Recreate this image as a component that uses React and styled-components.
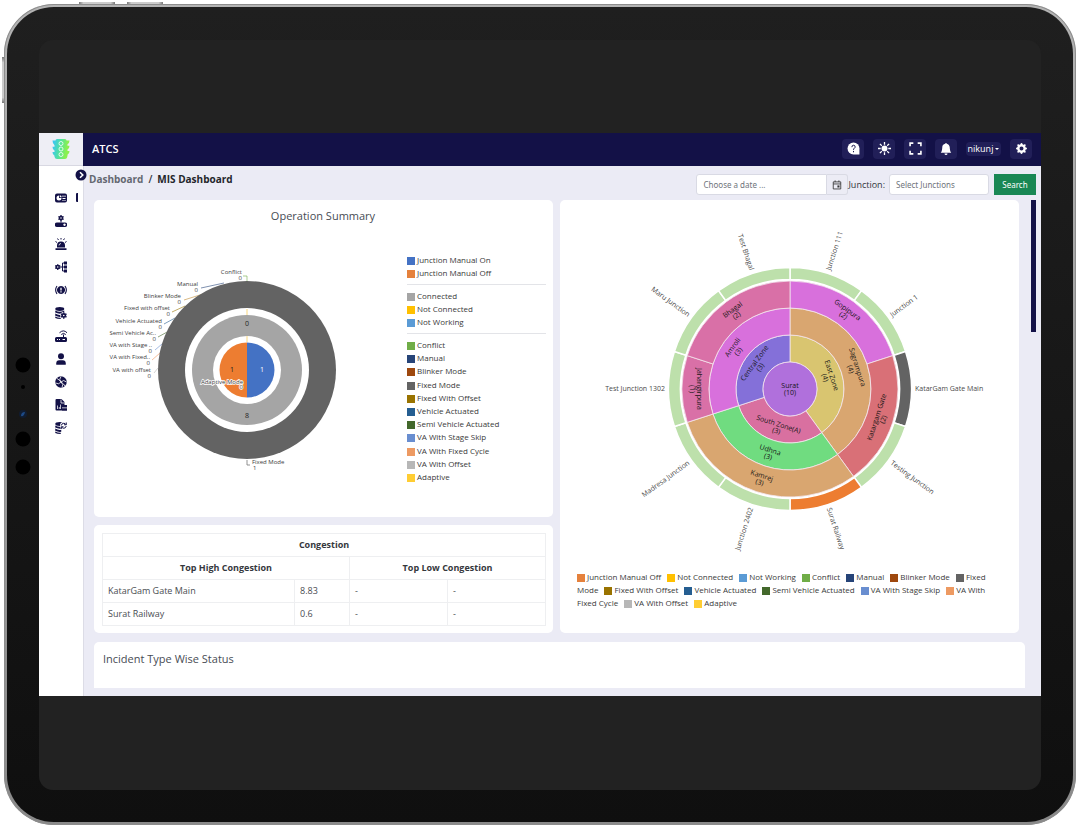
import React from "react";
import styled, { createGlobalStyle } from "styled-components";
import { BsGearFill, BsBellFill } from "react-icons/bs";

const NAVY = "#131147";
const MIST = "#ebebf5";

const GlobalStyle = createGlobalStyle`
  * { box-sizing: border-box; }
  body {
    margin: 0;
    background: #fff;
    color: #33363b;
    font-family: "Open Sans", "Noto Sans", sans-serif;
    font-size: 9px;
  }
  button, input { font-family: inherit; }
  ul { list-style: none; margin: 0; padding: 0; }
  h1, h2 { margin: 0; font-weight: 400; }
`;

/* ---------- tablet frame ---------- */

const Page = styled.div`
  padding: 4px 4px 5px;
`;

const Frame = styled.div`
  position: relative;
  padding: 3px;
  border-radius: 50px;
  background: linear-gradient(#b4b4b4, #8a8a8a);
  box-shadow: inset 0 0 0 1px #8d8d8d;
`;

const Bezel = styled.div`
  position: relative;
  padding: 33px 32px 32px;
  border-radius: 47px;
  background: linear-gradient(#1f1f1f, #0f0f0f);
`;

const Screen = styled.div`
  padding: 93px 0 94px;
  border-radius: 14px;
  background: #222;
`;

const SideKey = styled.span`
  position: absolute;
  background: linear-gradient(to ${(p) => (p.$left ? "bottom" : "right")}, #777, #ccc 12%, #ccc 88%, #777);
  ${(p) =>
    p.$left
      ? "left: -2px; top: 53px; width: 2px; height: 46px;"
      : `top: -2px; left: ${p.$x}px; width: 36px; height: 2px;`}
`;

const Cameras = styled.svg`
  position: absolute;
  left: 8px;
  top: 50%;
  transform: translateY(-50%);
`;

/* ---------- application shell ---------- */

const Shell = styled.div`
  display: grid;
  grid-template-columns: 44px 1fr;
  background: ${MIST};
`;

const Side = styled.nav`
  background: #fff;
  box-shadow: 1px 0 #dcdce6;
`;

const Brand = styled.a`
  display: flex;
  align-items: center;
  justify-content: center;
  height: 33px;
  background: #eeeef5;
  border-bottom: 1px solid #d8d8e2;
`;

const NavList = styled.ul`
  padding-top: 20px;
`;

const NavLink = styled.a`
  position: relative;
  display: flex;
  align-items: center;
  justify-content: center;
  height: 23px;
  color: ${NAVY};
  &::after {
    content: "";
    display: ${(p) => (p.$active ? "block" : "none")};
    position: absolute;
    right: 5px;
    width: 2px;
    height: 9px;
    border-radius: 1px 0 0 1px;
    background: ${NAVY};
  }
`;

const Main = styled.div`
  position: relative;
  min-width: 0;
`;

const TopBar = styled.header`
  display: flex;
  align-items: center;
  gap: 9px;
  height: 33px;
  padding: 0 9px 2px;
  background: ${NAVY};
  color: #fff;
`;

const AppName = styled.h1`
  flex: 1;
  font-size: 11px;
  line-height: 16px;
  font-weight: 600;
`;

const BarButton = styled.button`
  display: flex;
  align-items: center;
  justify-content: center;
  width: 22px;
  height: 20px;
  padding: 0;
  border: 0;
  border-radius: 4px;
  background: #211f58;
  color: #fff;
`;

const UserButton = styled(BarButton)`
  width: 35px;
  height: 14px;
  gap: 2px;
  font-size: 9px;
`;

const Caret = styled.i`
  border: 2px solid transparent;
  border-top-color: #fff;
  border-bottom: 0;
`;

const Expander = styled.button`
  position: absolute;
  left: -8px;
  top: 36px;
  width: 12px;
  height: 12px;
  padding: 0;
  border: 0;
  background: none;
  line-height: 0;
`;

const ToolRow = styled.div`
  display: flex;
  align-items: flex-start;
  justify-content: space-between;
  padding: 8px 5px 5px 6px;
`;

const Crumbs = styled.div`
  display: flex;
  gap: 5px;
  font-size: 10px;
  line-height: 11px;
  font-weight: 600;
`;

const Crumb = styled.a`
  color: ${(p) => (p.$current ? "#24262b" : "#646871")};
  font-weight: 700;
  text-decoration: none;
`;

const Filters = styled.form`
  display: flex;
  align-items: center;
  height: 21px;
`;

const Field = styled.input`
  width: ${(p) => p.$w}px;
  height: 21px;
  padding: 0 6px;
  border: 1px solid #d9dae4;
  border-radius: ${(p) => (p.$joined ? "3px 0 0 3px" : "3px")};
  background: #fff;
  font-size: 8px;
  font-family: "Noto Sans", "Open Sans", sans-serif;
  &::placeholder { color: #6f747b; }
`;

const DateButton = styled.button`
  display: flex;
  align-items: center;
  justify-content: center;
  width: 21px;
  height: 21px;
  padding: 0;
  border: 1px solid #d9dae4;
  border-left: 0;
  border-radius: 0 3px 3px 0;
  background: #ececf5;
  color: #333;
`;

const FieldLabel = styled.label`
  margin-right: 4px;
  font-size: 9px;
  color: #33363b;
`;

const SearchButton = styled.button`
  width: 42px;
  height: 21px;
  margin-left: 5px;
  padding: 0;
  border: 0;
  background: #198754;
  color: #fff;
  font-size: 8px;
  font-family: "Noto Sans", "Open Sans", sans-serif;
`;

/* ---------- dashboard content ---------- */

const Body = styled.div`
  display: flex;
  justify-content: space-between;
  padding: 0 5px 8px 11px;
`;

const Content = styled.main`
  flex: 1;
  min-width: 0;
`;

const ScrollThumb = styled.div`
  width: 5px;
  height: 132px;
  margin-left: 6px;
  background: ${NAVY};
`;

const Columns = styled.div`
  display: grid;
  grid-template-columns: 1fr 1fr;
  gap: 7px;
  margin-right: 6px;
`;

const Stack = styled.div`
  display: flex;
  flex-direction: column;
  gap: 8px;
  min-width: 0;
`;

const Card = styled.section`
  border-radius: 5px;
  background: #fff;
  padding: ${(p) => p.$pad};
`;

const CardTitle = styled.h2`
  font-size: 11px;
  line-height: 14px;
  text-align: ${(p) => p.$align || "left"};
  color: #474c54;
`;

const ChartRow = styled.div`
  display: flex;
  justify-content: space-between;
  gap: 7px;
  margin-top: 30px;
`;

const LegendColumn = styled.div`
  flex: 1;
`;

const LegendGroup = styled.ul`
  display: grid;
  align-content: space-between;
  height: ${(p) => p.$h}px;
  & + & {
    margin-top: 5px;
    padding-top: 4px;
    border-top: 1px solid #e3e4e8;
  }
`;

const LegendItem = styled.li`
  display: ${(p) => (p.$inline ? "inline" : "block")};
  margin-right: ${(p) => (p.$inline ? 4 : 0)}px;
  font-size: 8px;
  line-height: 13px;
  color: #3a3a3a;
`;

const Swatch = styled.i`
  display: inline-block;
  width: 8px;
  height: 8px;
  margin-right: 2px;
  vertical-align: -2px;
  background: ${(p) => p.$c};
`;

const InlineLegend = styled.ul`
  margin-top: 6px;
  line-height: 13px;
  font-size: 8px;
`;

const SunburstChart = styled.svg`
  display: block;
  margin: 0 auto;
`;

const Table = styled.table`
  width: 100%;
  table-layout: fixed;
  border-collapse: collapse;
  font-size: 9px;
  line-height: 12px;
  td, th {
    height: 23px;
    padding: 0 5px;
    border: 1px solid #eeeff1;
    text-align: left;
    color: #4a4d52;
  }
  th { text-align: center; font-weight: 700; color: #35383d; }
`;

const ClippedCard = styled(Card)`
  height: 46px;
  margin-top: 9px;
  border-radius: 5px 5px 0 0;
`;

/* ---------- drawings ---------- */

const polar = (r, deg) => {
  const a = ((deg - 90) * Math.PI) / 180;
  return [r * Math.cos(a), r * Math.sin(a)];
};

const sector = (r0, r1, a0, a1) => {
  const [x0, y0] = polar(r1, a0);
  const [x1, y1] = polar(r1, a1);
  const [x2, y2] = polar(r0, a1);
  const [x3, y3] = polar(r0, a0);
  const big = a1 - a0 > 180 ? 1 : 0;
  return `M${x0} ${y0}A${r1} ${r1} 0 ${big} 1 ${x1} ${y1}L${x2} ${y2}A${r0} ${r0} 0 ${big} 0 ${x3} ${y3}Z`;
};

const donutLabels = [
  ["Conflict", -5, -98, "#70ad47", "M-4 -94H0V-89"],
  ["Manual", -49, -86, "#264478", "M-46 -82L-23 -87"],
  ["Blinker Mode", -66, -74, "#c08a30", "M-63 -70L-44 -76"],
  ["Fixed with offset", -77, -62, "#997300", "M-75 -58L-62 -64"],
  ["Vehicle Actuated", -85, -49, "#255e91", "M-83 -46L-72 -52"],
  ["Semi Vehicle Ac..", -91, -37, "#43682b", "M-89 -33L-78 -39"],
  ["VA with Stage ..", -95, -25, "#698ed0", "M-92 -20L-85 -26"],
  ["VA with Fixed..", -97, -13, "#f1975a", "M-95 -10L-87 -17"],
  ["VA with offset", -96, 0, "#b7b7b7", "M-93 3L-89 -2"],
];

const Donut = () => (
  <svg width="300" height="240" viewBox="-147 -117 300 240" fontSize="6" fill="#3c3c3c" role="img" aria-label="Operation Summary">
    {donutLabels.map(([name, x, y, color, line]) => (
      <g key={name} textAnchor="end">
        <path d={line} fill="none" stroke={color} strokeWidth=".6" />
        <text x={x} y={y + 2}>{name}</text>
        <text x={x} y={y + 8}>0</text>
      </g>
    ))}
    <circle r="89" fill="#636363" />
    <circle r="62" fill="#fff" />
    <circle r="55" fill="#a5a5a5" />
    <circle r="34" fill="#fff" />
    <path d="M0 -27.500A27.500 27.500 0 0 1 0 27.500Z" fill="#4472c4" />
    <path d="M0 -27.500A27.500 27.500 0 0 0 0 27.500Z" fill="#ed7d31" />
    <path d="M0 -61V-55M0 -34V-28" stroke="#fbd87f" />
    <path d="M0 90V95H3" fill="none" stroke="#777" strokeWidth=".8" />
    <text x="5" y="94">Fixed Mode</text>
    <text x="6" y="100">1</text>
    <g textAnchor="end" stroke="#fff" strokeWidth="1.500" paintOrder="stroke">
      <text x="-4" y="14">Adaptive Mode</text>
      <text x="-4" y="19">0</text>
    </g>
    <g textAnchor="middle" fontSize="7" fill="#222">
      <text y="-44">0</text>
      <text y="48">8</text>
      <text x="-15" y="2">1</text>
      <text x="15" y="2" fill="#fff">1</text>
    </g>
  </svg>
);

const zones = [
  [27, 54, 0, 144, "#d9c570", "East Zone", 4],
  [27, 54, 144, 252, "#d970a0", "South Zone(A)", 3],
  [27, 54, 252, 360, "#8470d9", "Central Zone", 3],
  [54, 81, 0, 144, "#d9a670", "Sagrampura", 4],
  [54, 81, 144, 252, "#70dc80", "Udhna", 3],
  [54, 81, 252, 360, "#d870dc", "Amroli", 3],
  [81, 108, 0, 72, "#d870dc", "Gopipura", 2],
  [81, 108, 72, 144, "#d97077", "Katargam Gate", 2],
  [81, 108, 144, 252, "#d9a670", "Kamrej", 3],
  [81, 108, 252, 288, "#d970a7", "Jahangirpura", 1],
  [81, 108, 288, 360, "#d970a7", "Bhagal", 2],
];

const GREEN = "#bde0ab";
const junctions = [
  ["Junction 111", GREEN],
  ["Junction 1", GREEN],
  ["KatarGam Gate Main", "#636363"],
  ["Testing Junction", GREEN],
  ["Surat Railway", "#ed7d31"],
  ["Junction 2402", GREEN],
  ["Madresa Junction", GREEN],
  ["Test Junction 1302", GREEN],
  ["Maru Junction", GREEN],
  ["Test Bhagal", GREEN],
];

const Sunburst = () => (
  <SunburstChart width="390" height="350" viewBox="-195 -175 390 350" fontSize="7" role="img" aria-label="Junction status by zone">
    {zones.map(([r0, r1, a0, a1, color, name]) => (
      <path key={name} d={sector(r0, r1, a0, a1)} fill={color} stroke="#f4e6ee" strokeWidth=".8" />
    ))}
    <circle r="27" fill="#b070dc" stroke="#f4e6ee" strokeWidth=".8" />
    {junctions.map(([name, color], i) => (
      <path key={name} d={sector(109.5, 121.5, i * 36, i * 36 + 36)} fill={color} stroke="#fff" strokeWidth="1.500" />
    ))}
    <g textAnchor="middle" fill="#151515">
      <text y="-1">Surat</text>
      <text y="6">(10)</text>
      {zones.map(([r0, r1, a0, a1, , name, count]) => {
        const mid = (a0 + a1) / 2;
        const lower = mid > 90 && mid < 270;
        const [x, y] = polar((r0 + r1) / 2, mid);
        return (
          <g key={name} transform={`translate(${x} ${y}) rotate(${lower ? mid - 180 : mid === 270 ? 90 : mid})`}>
            <text y="-1">{name}</text>
            <text y="6">({count})</text>
          </g>
        );
      })}
    </g>
    <g fill="#4a4a4a">
      {junctions.map(([name], i) => {
        const mid = i * 36 + 18;
        const left = mid > 180;
        const [x, y] = polar(125, mid);
        return (
          <text
            key={name}
            y="2"
            textAnchor={left ? "end" : "start"}
            transform={`translate(${x} ${y}) rotate(${left ? mid + 90 : mid - 90})`}
          >
            {name}
          </text>
        );
      })}
    </g>
  </SunburstChart>
);

const Logo = () => (
  <svg width="18" height="20" viewBox="0 0 18 20" aria-hidden="true">
    <defs>
      <linearGradient id="lamp" x1="0" y1="0" x2="1" y2=".2">
        <stop offset=".1" stopColor="#3cc8ee" />
        <stop offset=".5" stopColor="#52e39c" />
        <stop offset=".9" stopColor="#8bf04f" />
      </linearGradient>
    </defs>
    <path
      fill="url(#lamp)"
      d="M5 0h8q1.500 0 1.500 1.500H17.500q0 3-2 3.800v1.400h2q0 3-2 3.800v1.400h2q0 3-2 3.800v1Q15 20 13 20H5q-2 0-2.500-2.300v-1q-2-.8-2-3.800h2v-1.400Q.5 10.700 .5 7.700h2V6.300Q.5 4.500 .5 1.500h3Q3.500 0 5 0Z"
    />
    <g fill="none" stroke="#fff" strokeOpacity=".8">
      <circle cx="9" cy="4.500" r="2" />
      <circle cx="9" cy="10" r="2" />
      <circle cx="9" cy="15.500" r="2" />
    </g>
  </svg>
);

const Icon = ({ children, size = 12 }) => (
  <svg width={size} height={size} viewBox="0 0 24 24" fill="currentColor" stroke="none" aria-hidden="true">
    {children}
  </svg>
);

const Cog = ({ x, y, r }) => (
  <g transform={`translate(${x} ${y})`} fill="none" stroke="currentColor">
    <circle r={r * 0.6} strokeWidth={r * 0.6} />
    {[0, 60, 120].map((deg) => (
      <path
        key={deg}
        transform={`rotate(${deg})`}
        d={`M0 ${-r * 1.15}V${-r * 0.7}M0 ${r * 0.7}V${r * 1.15}`}
        strokeWidth={r * 0.5}
      />
    ))}
  </g>
);

const Disks = () => (
  <>
    <ellipse cx="9.500" cy="4" rx="9" ry="3.800" />
    <path d="M.5 7q9 5 18 0v4q-9 4.500-18 0ZM.5 13q6 4 12 2.500v4q-6 1-12-2ZM.5 19q6 3 11 2.500V24Q4 24 .5 22Z" />
  </>
);

const navIcons = {
  Dashboard: (
    <>
      <path fillRule="evenodd" d="M4 3h16q4 0 4 4v10q0 4-4 4H4q-4 0-4-4V7q0-4 4-4ZM8 7a5 5 0 1 0 5 5H8ZM15 7v3h2V7ZM19 7v3h2V7ZM15 12v2h6v-2ZM15 16v2h2v-2ZM19 16v2h2v-2Z" />
      <path d="M9.500 6.500a4.500 4.500 0 0 1 4 4h-4Z" fill="#fff" />
    </>
  ),
  Control: (
    <>
      <Cog x="12" y="6" r="5.200" />
      <path d="M11 11h2v4h-2Z" />
      <path fillRule="evenodd" d="M4 15h16a4.500 4.500 0 0 1 0 9H4a4.500 4.500 0 0 1 0-9Zm15 2a2.400 2.400 0 1 0 .1 0Z" />
    </>
  ),
  Alarms: (
    <>
      <path d="M4 19v-4q0-8 8-8t8 8v4ZM1 20.500h22V24H1Z" />
      <path d="M8 15q0-4 4-4" stroke="#fff" strokeWidth="1.500" fill="none" />
      <path d="M1 7l3 2M23 7l-3 2M5 1l2 3M19 1l-2 3M12 0v3" stroke="currentColor" strokeWidth="2" />
    </>
  ),
  Network: (
    <>
      <Cog x="5.500" y="12" r="5" />
      <path d="M10 12h10M15 4v16M15 4h5M15 20h5" stroke="currentColor" strokeWidth="2" fill="none" />
      <path d="M18 1h6v6h-6ZM18 9h6v6h-6ZM18 17h6v6h-6Z" />
    </>
  ),
  Alerts: (
    <>
      <path fillRule="evenodd" d="M12 4a8 8 0 1 0 .1 0ZM10.700 7.500h2.600v5.500h-2.600ZM10.700 14.500h2.600v2.500h-2.600Z" />
      <path d="M4 4q-5.500 8 0 16M20 4q5.500 8 0 16" stroke="currentColor" strokeWidth="2.200" fill="none" />
    </>
  ),
  Data: (
    <>
      <Disks />
      <circle cx="17.500" cy="17" r="7" fill="#fff" />
      <Cog x="17.500" y="17" r="5.500" />
    </>
  ),
  Devices: (
    <>
      <path fillRule="evenodd" d="M3 14h18q3 0 3 3v4q0 3-3 3H3q-3 0-3-3v-4q0-3 3-3ZM4 18v2h2v-2ZM8 18v2h2v-2ZM15 18v2h5v-2Z" />
      <path d="M17 9v6M12.500 9q4.500-4.500 9 0M9 5.500q8-7.500 15 0" stroke="currentColor" strokeWidth="2" fill="none" />
    </>
  ),
  Users: (
    <>
      <circle cx="12" cy="6.500" r="6" />
      <path d="M2.500 23.500v-3q0-6 6-6h7q6 0 6 6v3Z" />
    </>
  ),
  Analytics: (
    <>
      <circle cx="12" cy="12" r="11.500" />
      <path d="M12 1q-5 6 0 11M23 12q-6-6-11 0M14 23q4-6-2-11M1 14q7 4 11-2M4 5q4 2 8 7M20 20q-2-4-8-8" stroke="#fff" strokeWidth="1.600" fill="none" />
    </>
  ),
  Reports: (
    <>
      <path d="M3 0h10l6 6v7h-5v10H3q-2 0-2-2V2q0-2 2-2Z" />
      <path d="M12 1v7h7M5 13v7M8.500 16v4M11 11v9" stroke="#fff" strokeWidth="1.500" fill="none" />
      <path d="M14 12h10v5H14ZM14 18.500h10v5H14Z" />
    </>
  ),
  Backup: (
    <>
      <Disks />
      <circle cx="17.500" cy="7.500" r="7.500" fill="#fff" />
      <path d="M12.500 7q1-4.500 5-4.500 3 0 4.500 2.500M22.500 8q-1 4.500-5 4.500-3 0-4.500-2.500M22.500 1v4.500H18M12.500 14V9.500H17" stroke="currentColor" strokeWidth="2" fill="none" />
    </>
  ),
};

/* ---------- data ---------- */

const palette = [
  ["Junction Manual On", "#4472c4"],
  ["Junction Manual Off", "#e5813c"],
  ["Connected", "#a5a5a5"],
  ["Not Connected", "#ffc000"],
  ["Not Working", "#5b9bd5"],
  ["Conflict", "#70ad47"],
  ["Manual", "#264478"],
  ["Blinker Mode", "#9e480e"],
  ["Fixed Mode", "#636363"],
  ["Fixed With Offset", "#997300"],
  ["Vehicle Actuated", "#255e91"],
  ["Semi Vehicle Actuated", "#43682b"],
  ["VA With Stage Skip", "#698ed0"],
  ["VA With Fixed Cycle", "#ed9a62"],
  ["VA With Offset", "#b7b7b7"],
  ["Adaptive", "#ffcd33"],
];

const groups = [
  [palette.slice(0, 2), 26],
  [palette.slice(2, 5), 44],
  [palette.slice(5), 150],
];

const congestion = [
  ["KatarGam Gate Main", "8.83", "-", "-"],
  ["Surat Railway", "0.6", "-", "-"],
];

export default function App() {
  return (
    <Page>
      <GlobalStyle />
      <Frame>
        <SideKey $x={75} />
        <SideKey $x={123} />
        <SideKey $left />
        <Bezel>
          <Cameras width="16" height="120" viewBox="0 0 16 120" aria-hidden="true">
            <circle cx="8" cy="10" r="7.500" />
            <circle cx="8" cy="32" r="2" />
            <circle cx="8" cy="59" r="4" fill="#101c30" />
            <path d="M6 61q0-4 4-4-1 5-4 4Z" fill="#1d4a86" />
            <circle cx="8" cy="84" r="7.500" />
            <circle cx="8" cy="112" r="7.500" />
          </Cameras>
          <Screen>
            <Shell>
              <Side aria-label="Main">
                <Brand href="#" aria-label="Home"><Logo /></Brand>
                <NavList>
                  {Object.entries(navIcons).map(([name, art], i) => (
                    <li key={name}>
                      <NavLink href="#" aria-label={name} $active={i === 0}>
                        <Icon>{art}</Icon>
                      </NavLink>
                    </li>
                  ))}
                </NavList>
              </Side>
              <Main>
                <TopBar>
                  <AppName>ATCS</AppName>
                  <BarButton aria-label="Help">
                    <Icon size={13}>
                      <path d="M12 1a11 11 0 0 1 11 11v11H12A11 11 0 0 1 12 1Z" />
                      <path d="M9 9.500q0-3.500 3-3.500t3 3q0 1.500-1.500 2.500T12 14.500M12 16.500v2.500" fill="none" stroke={NAVY} strokeWidth="1.800" />
                    </Icon>
                  </BarButton>
                  <BarButton aria-label="Theme">
                    <Icon size={13}>
                      <circle cx="12" cy="12" r="5.500" />
                      <path
                        d="M12 0v5M12 19v5M0 12h5M19 12h5M3.500 3.500L7 7M17 17l3.500 3.500M3.500 20.500L7 17M17 7l3.500-3.500"
                        stroke="currentColor"
                        strokeWidth="2.400"
                      />
                    </Icon>
                  </BarButton>
                  <BarButton aria-label="Full screen">
                    <Icon size={13}>
                      <path d="M2 8V2h6M16 2h6v6M22 16v6h-6M8 22H2v-6" fill="none" stroke="currentColor" strokeWidth="3" />
                    </Icon>
                  </BarButton>
                  <BarButton aria-label="Notifications"><BsBellFill size={12} /></BarButton>
                  <UserButton>nikunj<Caret /></UserButton>
                  <BarButton aria-label="Settings"><BsGearFill size={11} /></BarButton>
                </TopBar>
                <Expander aria-label="Expand menu">
                  <svg width="12" height="12" viewBox="0 0 12 12">
                    <circle cx="6" cy="6" r="5.500" fill={NAVY} />
                    <path d="M5 3.200L7.800 6 5 8.800" fill="none" stroke="#fff" strokeWidth="1.600" />
                  </svg>
                </Expander>
                <ToolRow>
                  <Crumbs>
                    <Crumb href="#">Dashboard</Crumb>
                    <span>/</span>
                    <Crumb href="#" $current>MIS Dashboard</Crumb>
                  </Crumbs>
                  <Filters onSubmit={(e) => e.preventDefault()}>
                    <Field $w={131} $joined placeholder="Choose a date ..." aria-label="Date" />
                    <DateButton type="button" aria-label="Open calendar">
                      <Icon size={10}>
                        <path d="M3 4.500h18v17H3ZM3 9.500h18M7.500 1v4M16.500 1v4" fill="none" stroke="currentColor" strokeWidth="2" />
                        <path d="M13 13h5v5h-5Z" />
                      </Icon>
                    </DateButton>
                    <FieldLabel htmlFor="junctions">Junction:</FieldLabel>
                    <Field id="junctions" $w={100} placeholder="Select Junctions" />
                    <SearchButton>Search</SearchButton>
                  </Filters>
                </ToolRow>
                <Body>
                  <Content>
                    <Columns>
                      <Stack>
                        <Card $pad="9px 7px 24px 6px">
                          <CardTitle $align="center">Operation Summary</CardTitle>
                          <ChartRow>
                            <Donut />
                            <LegendColumn>
                              {groups.map(([items, h]) => (
                                <LegendGroup key={h} $h={h}>
                                  {items.map(([name, c]) => (
                                    <LegendItem key={name}><Swatch $c={c} />{name}</LegendItem>
                                  ))}
                                </LegendGroup>
                              ))}
                            </LegendColumn>
                          </ChartRow>
                        </Card>
                        <Card $pad="8px 8px 7px">
                          <Table>
                            <colgroup>
                              <col width="192" />
                              <col width="55" />
                              <col width="98" />
                              <col width="98" />
                            </colgroup>
                            <thead>
                              <tr><th colSpan={4}>Congestion</th></tr>
                              <tr>
                                <th colSpan={2}>Top High Congestion</th>
                                <th colSpan={2}>Top Low Congestion</th>
                              </tr>
                            </thead>
                            <tbody>
                              {congestion.map((row) => (
                                <tr key={row[0]}>
                                  {row.map((cell, i) => <td key={i}>{cell}</td>)}
                                </tr>
                              ))}
                            </tbody>
                          </Table>
                        </Card>
                      </Stack>
                      <Card $pad="14px 17px 0">
                        <Sunburst />
                        <InlineLegend>
                          {palette
                            .filter(([name]) => name !== "Junction Manual On" && name !== "Connected")
                            .map(([name, c]) => (
                              <React.Fragment key={name}>
                                <LegendItem $inline><Swatch $c={c} />{name}</LegendItem>{" "}
                              </React.Fragment>
                            ))}
                        </InlineLegend>
                      </Card>
                    </Columns>
                    <ClippedCard $pad="10px 9px">
                      <CardTitle>Incident Type Wise Status</CardTitle>
                    </ClippedCard>
                  </Content>
                  <ScrollThumb />
                </Body>
              </Main>
            </Shell>
          </Screen>
        </Bezel>
      </Frame>
    </Page>
  );
}
